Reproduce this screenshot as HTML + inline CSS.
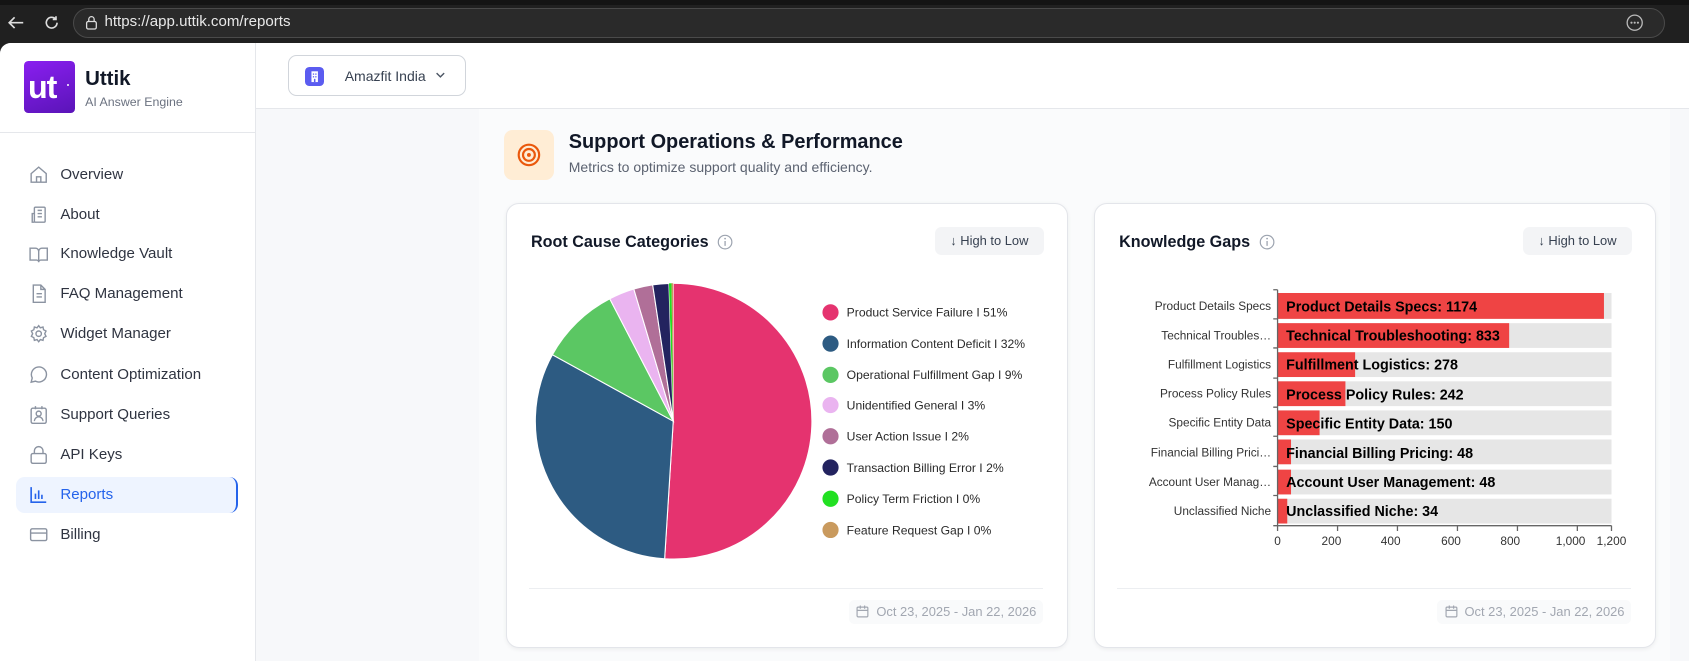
<!DOCTYPE html>
<html><head><meta charset="utf-8"><style>
html,body{margin:0;padding:0;overflow:hidden}
body{width:1689px;height:661px;background:#1f1f1f;font-family:"Liberation Sans",sans-serif}
#root{position:relative;width:1568px;height:614px;zoom:1.0772;overflow:hidden;background:#202020}
.abs{position:absolute}
.nav{position:absolute;left:27px;font-size:14px;color:#2f3441;height:20px;line-height:20px}
.nav svg{position:absolute;left:0;top:1px}
.nav span{position:absolute;left:29px;white-space:nowrap}
.card{position:absolute;top:188px;width:521px;height:414px;background:#fff;border:1px solid #e3e5ea;border-radius:12px;box-shadow:0 1px 4px rgba(0,0,0,.06);box-sizing:border-box}
.ctitle{position:absolute;left:22px;top:27px;font-size:15px;font-weight:600;color:#111827;display:flex;align-items:center;white-space:nowrap}
.ctitle svg{margin-left:8px}
.btn{position:absolute;top:22px;width:101px;height:26px;background:#f3f4f6;border-radius:6px;font-size:12px;color:#374151;line-height:26px;text-align:center}
.div{position:absolute;left:20px;right:22px;top:357px;border-top:1px solid #eceef1}
.date{position:absolute;top:368px;right:22px;width:180px;height:22px;background:#f9fafb;border-radius:5px;font-size:12px;color:#a2a7b1;line-height:22px;text-align:right;padding-right:6px;box-sizing:border-box}
.date svg{position:absolute;left:7px;top:5px}
</style></head><body><div id="root">
<div class="abs" style="left:0;top:0;width:1568px;height:5px;background:#141414"></div>
<svg class="abs" style="left:6px;top:12px" width="18" height="18" viewBox="0 0 18 18"><path d="M16 9H3M8 4L3 9l5 5" stroke="#ddd" stroke-width="1.6" fill="none"/></svg>
<svg class="abs" style="left:39px;top:12px" width="18" height="18" viewBox="0 0 18 18"><path d="M14 9a5 5 0 1 1-1.6-3.7M13 3v3h-3" stroke="#ddd" stroke-width="1.5" fill="none"/></svg>
<div class="abs" style="left:68px;top:7px;width:1478px;height:28px;border:1px solid #4a4a4a;border-radius:15px;background:#2a2a2a;box-sizing:border-box"></div>
<svg class="abs" style="left:79px;top:14px" width="12" height="14" viewBox="0 0 12 14"><rect x="1.5" y="6" width="9" height="7" rx="1.5" stroke="#ddd" fill="none" stroke-width="1.2"/><path d="M3.5 6V4a2.5 2.5 0 0 1 5 0v2" stroke="#ddd" fill="none" stroke-width="1.2"/></svg>
<div class="abs" style="left:97px;top:12px;font-size:14px;color:#e8e8e8">https://app.uttik.com/reports</div>
<svg class="abs" style="left:1509px;top:12px" width="18" height="18"><circle cx="9" cy="9" r="7" stroke="#bbb" fill="none" stroke-width="1.2"/><circle cx="6" cy="9" r="1" fill="#bbb"/><circle cx="9" cy="9" r="1" fill="#bbb"/><circle cx="12" cy="9" r="1" fill="#bbb"/></svg>
<div class="abs" style="left:0;top:40px;width:1568px;height:574px;background:#f7f8fa;border-top-left-radius:10px;overflow:hidden">
 <div class="abs" style="left:445px;top:60px;width:1105px;height:520px;background:#fafbfc"></div>
 <div class="abs" style="left:0;top:0;width:237px;height:574px;background:#fff;border-right:1px solid #e5e7eb"></div>
 <div class="abs" style="left:0;top:83px;width:237px;border-top:1px solid #e5e7eb"></div>
 <div class="abs" style="left:22px;top:17px;width:48px;height:48px;border-radius:4px;background:linear-gradient(160deg,#8a1ff0,#5a14b8)"></div>
 <div class="abs" style="left:26px;top:19px;width:44px;font-size:30px;font-weight:bold;color:#fff;letter-spacing:-1px;line-height:44px">ut</div>
 <div class="abs" style="left:62px;top:38px;width:2px;height:2px;background:#fff;border-radius:1px"></div>
 <div class="abs" style="left:79px;top:22px;font-size:19px;font-weight:bold;color:#111827">Uttik</div>
 <div class="abs" style="left:79px;top:48px;font-size:11.5px;color:#6b7280">AI Answer Engine</div>
</div>
<div class="abs" style="left:15px;top:443px;width:206px;height:33px;background:#eef4ff;border-radius:8px;border-right:2px solid #2563eb;box-sizing:border-box"></div>
<div class="nav" style="top:152px"><svg width="18" height="18" viewBox="0 0 18 18" fill="none" stroke="#8b93a1" stroke-width="1.3"><path d="M2 8l7-6 7 6v8H2z"/><path d="M7 16v-5h4v5"/></svg><span>Overview</span></div>
<div class="nav" style="top:189px"><svg width="18" height="18" viewBox="0 0 18 18" fill="none" stroke="#8b93a1" stroke-width="1.3"><rect x="5" y="2" width="10" height="14" rx="1"/><path d="M5 8H3v8h2M8 5h4M8 8h4M8 11h4"/></svg><span>About</span></div>
<div class="nav" style="top:226px"><svg width="18" height="18" viewBox="0 0 18 18" fill="none" stroke="#8b93a1" stroke-width="1.3"><path d="M1 3h5a3 3 0 0 1 3 3v10a2 2 0 0 0-2-2H1zM17 3h-5a3 3 0 0 0-3 3v10a2 2 0 0 1 2-2h6z"/></svg><span>Knowledge Vault</span></div>
<div class="nav" style="top:263px"><svg width="18" height="18" viewBox="0 0 18 18" fill="none" stroke="#8b93a1" stroke-width="1.3"><path d="M4 1h7l4 4v12H4zM11 1v4h4M7 9h5M7 12h5"/></svg><span>FAQ Management</span></div>
<div class="nav" style="top:300px"><svg width="18" height="18" viewBox="0 0 18 18" fill="none" stroke="#8b93a1" stroke-width="1.3"><circle cx="9" cy="9" r="2.5"/><path d="M9 1.5l1.5 2 2.5-.7.5 2.5 2.3 1.2-1.2 2.5 1.2 2.5-2.3 1.2-.5 2.5-2.5-.7L9 16.5l-1.5-2-2.5.7-.5-2.5-2.3-1.2L3.4 9 2.2 6.5l2.3-1.2.5-2.5 2.5.7z"/></svg><span>Widget Manager</span></div>
<div class="nav" style="top:338px"><svg width="18" height="18" viewBox="0 0 18 18" fill="none" stroke="#8b93a1" stroke-width="1.3"><path d="M2 16l1-4a7 7 0 1 1 3 3z"/></svg><span>Content Optimization</span></div>
<div class="nav" style="top:375px"><svg width="18" height="18" viewBox="0 0 18 18" fill="none" stroke="#8b93a1" stroke-width="1.3"><rect x="2" y="3" width="14" height="14" rx="1.5"/><circle cx="9" cy="8" r="2.3"/><path d="M5 15a4 4 0 0 1 8 0M6 1v3M12 1v3"/></svg><span>Support Queries</span></div>
<div class="nav" style="top:412px"><svg width="18" height="18" viewBox="0 0 18 18" fill="none" stroke="#8b93a1" stroke-width="1.3"><rect x="2" y="8" width="14" height="9" rx="1.5"/><path d="M5 8V5.5a4 4 0 0 1 8 0V8"/></svg><span>API Keys</span></div>
<div class="nav" style="top:449px;color:#2563eb"><svg width="18" height="18" viewBox="0 0 18 18" fill="none" stroke="#2563eb" stroke-width="1.5"><path d="M2 2v14h14M6 13V8M9 13V5M12 13V9"/></svg><span>Reports</span></div>
<div class="nav" style="top:486px"><svg width="18" height="18" viewBox="0 0 18 18" fill="none" stroke="#8b93a1" stroke-width="1.3"><rect x="1.5" y="3.5" width="15" height="11" rx="1.5"/><path d="M1.5 7.5h15"/></svg><span>Billing</span></div>
<div class="abs" style="left:238px;top:40px;width:1330px;height:60px;background:#fff;border-bottom:1px solid #e5e7eb"></div>
<div class="abs" style="left:267px;top:51px;width:166px;height:38px;border:1px solid #d1d5db;border-radius:8px;box-sizing:border-box;background:#fff"></div>
<div class="abs" style="left:283px;top:62px;width:18px;height:18px;border-radius:4px;background:#5b5cf0"></div>
<svg class="abs" style="left:283px;top:62px" width="18" height="18"><rect x="6" y="4" width="6" height="10" fill="#fff"/><rect x="7.3" y="6" width="1.2" height="1.2" fill="#5b5cf0"/><rect x="9.5" y="6" width="1.2" height="1.2" fill="#5b5cf0"/><rect x="7.3" y="8.5" width="1.2" height="1.2" fill="#5b5cf0"/><rect x="9.5" y="8.5" width="1.2" height="1.2" fill="#5b5cf0"/><rect x="8.3" y="11" width="1.4" height="3" fill="#5b5cf0"/></svg>
<div class="abs" style="left:320px;top:63px;font-size:13px;color:#374151">Amazfit India</div>
<svg class="abs" style="left:404px;top:66px" width="10" height="8"><path d="M1.5 2l3.5 3.5L8.5 2" stroke="#4b5563" stroke-width="1.3" fill="none"/></svg>
<div class="abs" style="left:468px;top:121px;width:46px;height:46px;background:#ffedd5;border-radius:8px"></div>
<svg class="abs" style="left:479px;top:132px" width="24" height="24"><circle cx="12" cy="12" r="9.5" stroke="#ea580c" stroke-width="2" fill="none"/><circle cx="12" cy="12" r="5.5" stroke="#ea580c" stroke-width="2" fill="none"/><circle cx="12" cy="12" r="1.8" fill="#ea580c"/></svg>
<div class="abs" style="left:528px;top:122px;font-size:18.5px;font-weight:bold;color:#111827">Support Operations &amp; Performance</div>
<div class="abs" style="left:528px;top:148px;font-size:13px;color:#5b6270">Metrics to optimize support quality and efficiency.</div>
<div class="card" style="left:470px">
 <div class="ctitle">Root Cause Categories<svg width="15" height="15"><circle cx="7.5" cy="7.5" r="6.3" stroke="#9ca3af" fill="none" stroke-width="1.1"/><path d="M7.5 6.5v4.5" stroke="#9ca3af" stroke-width="1.2"/><circle cx="7.5" cy="4.3" r=".8" fill="#9ca3af"/></svg></div>
 <div class="btn" style="left:397px">&#8595; High to Low</div>
 <div class="div"></div>
 <div class="date"><svg width="12" height="12" fill="none" stroke="#a2a7b1" stroke-width="1.1"><rect x="1" y="2" width="10" height="9" rx="1"/><path d="M1 5h10M4 .5v3M8 .5v3"/></svg>Oct 23, 2025 - Jan 22, 2026</div>
</div>
<svg class="abs" style="left:0;top:0" width="1568" height="614">
<g stroke="#fff" stroke-width="1">
<path d="M625 391L625 263A128 128 0 1 1 617 518.7Z" fill="#e5336f"/>
<path d="M625 391L617 518.7A128 128 0 0 1 512.8 329.3Z" fill="#2d5b82"/>
<path d="M625 391L512.8 329.3A128 128 0 0 1 566.1 277.4Z" fill="#5bc763"/>
<path d="M625 391L566.1 277.4A128 128 0 0 1 588.4 268.3Z" fill="#eab4f0"/>
<path d="M625 391L588.4 268.3A128 128 0 0 1 605.9 264.4Z" fill="#b06f98"/>
<path d="M625 391L605.9 264.4A128 128 0 0 1 621 263.1Z" fill="#23235f"/>
</g>
<path d="M625 391L621 263.1A128 128 0 0 1 623.4 263Z" fill="#22e022"/>
<path d="M625 391L623.4 263A128 128 0 0 1 625 263Z" fill="#c99a5e"/>
<g font-family="Liberation Sans,sans-serif" font-size="11.3" fill="#2a2a2a">
<circle cx="771" cy="290" r="7.5" fill="#e5336f"/><text x="786" y="294">Product Service Failure I 51%</text>
<circle cx="771" cy="319" r="7.5" fill="#2d5b82"/><text x="786" y="323">Information Content Deficit I 32%</text>
<circle cx="771" cy="348" r="7.5" fill="#5bc763"/><text x="786" y="352">Operational Fulfillment Gap I 9%</text>
<circle cx="771" cy="376" r="7.5" fill="#eab4f0"/><text x="786" y="380">Unidentified General I 3%</text>
<circle cx="771" cy="405" r="7.5" fill="#b06f98"/><text x="786" y="409">User Action Issue I 2%</text>
<circle cx="771" cy="434" r="7.5" fill="#23235f"/><text x="786" y="438">Transaction Billing Error I 2%</text>
<circle cx="771" cy="463" r="7.5" fill="#22e022"/><text x="786" y="467">Policy Term Friction I 0%</text>
<circle cx="771" cy="492" r="7.5" fill="#c99a5e"/><text x="786" y="496">Feature Request Gap I 0%</text>
</g>
</svg>
<div class="card" style="left:1016px">
 <div class="ctitle">Knowledge Gaps<svg width="15" height="15"><circle cx="7.5" cy="7.5" r="6.3" stroke="#9ca3af" fill="none" stroke-width="1.1"/><path d="M7.5 6.5v4.5" stroke="#9ca3af" stroke-width="1.2"/><circle cx="7.5" cy="4.3" r=".8" fill="#9ca3af"/></svg></div>
 <div class="btn" style="left:397px">&#8595; High to Low</div>
 <div class="div"></div>
 <div class="date"><svg width="12" height="12" fill="none" stroke="#a2a7b1" stroke-width="1.1"><rect x="1" y="2" width="10" height="9" rx="1"/><path d="M1 5h10M4 .5v3M8 .5v3"/></svg>Oct 23, 2025 - Jan 22, 2026</div>
</div>
<svg class="abs" style="left:0;top:0" width="1568" height="614" font-family="Liberation Sans,sans-serif">
<g fill="#e6e6e6">
<rect x="1186" y="272" width="310" height="24"/><rect x="1186" y="300" width="310" height="23"/><rect x="1186" y="327" width="310" height="23"/><rect x="1186" y="354" width="310" height="23"/><rect x="1186" y="381" width="310" height="23"/><rect x="1186" y="408" width="310" height="23"/><rect x="1186" y="436" width="310" height="23"/><rect x="1186" y="463" width="310" height="23"/>
</g>
<g fill="#ef4444">
<rect x="1186" y="272" width="303" height="24"/><rect x="1186" y="300" width="215" height="23"/><rect x="1186" y="327" width="72" height="23"/><rect x="1186" y="354" width="63" height="23"/><rect x="1186" y="381" width="39" height="23"/><rect x="1186" y="408" width="12.5" height="23"/><rect x="1186" y="436" width="12.5" height="23"/><rect x="1186" y="463" width="9" height="23"/>
</g>
<g font-size="13.3" font-weight="bold" fill="#000">
<text x="1194" y="289">Product Details Specs: 1174</text>
<text x="1194" y="316">Technical Troubleshooting: 833</text>
<text x="1194" y="343">Fulfillment Logistics: 278</text>
<text x="1194" y="371">Process Policy Rules: 242</text>
<text x="1194" y="398">Specific Entity Data: 150</text>
<text x="1194" y="425">Financial Billing Pricing: 48</text>
<text x="1194" y="452">Account User Management: 48</text>
<text x="1194" y="479">Unclassified Niche: 34</text>
</g>
<g font-size="11" fill="#333" text-anchor="end">
<text x="1180" y="288">Product Details Specs</text>
<text x="1180" y="315">Technical Troubles…</text>
<text x="1180" y="342">Fulfillment Logistics</text>
<text x="1180" y="369">Process Policy Rules</text>
<text x="1180" y="396">Specific Entity Data</text>
<text x="1180" y="424">Financial Billing Prici…</text>
<text x="1180" y="451">Account User Manag…</text>
<text x="1180" y="478">Unclassified Niche</text>
</g>
<g stroke="#666" stroke-width="1.2" fill="none">
<path d="M1186 269V488H1496"/>
<path d="M1182 269h4M1182 296h4M1182 323h4M1182 351h4M1182 378h4M1182 405h4M1182 433h4M1182 460h4M1182 488h4"/>
<path d="M1186 488v5M1241.7 488v5M1297.3 488v5M1353 488v5M1408.7 488v5M1464.3 488v5M1496 488v5"/>
</g>
<g font-size="11" fill="#333" text-anchor="middle">
<text x="1186" y="506">0</text><text x="1236" y="506">200</text><text x="1291" y="506">400</text><text x="1347" y="506">600</text><text x="1402" y="506">800</text><text x="1458" y="506">1,000</text><text x="1496" y="506">1,200</text>
</g>
</svg>
</div></body></html>
